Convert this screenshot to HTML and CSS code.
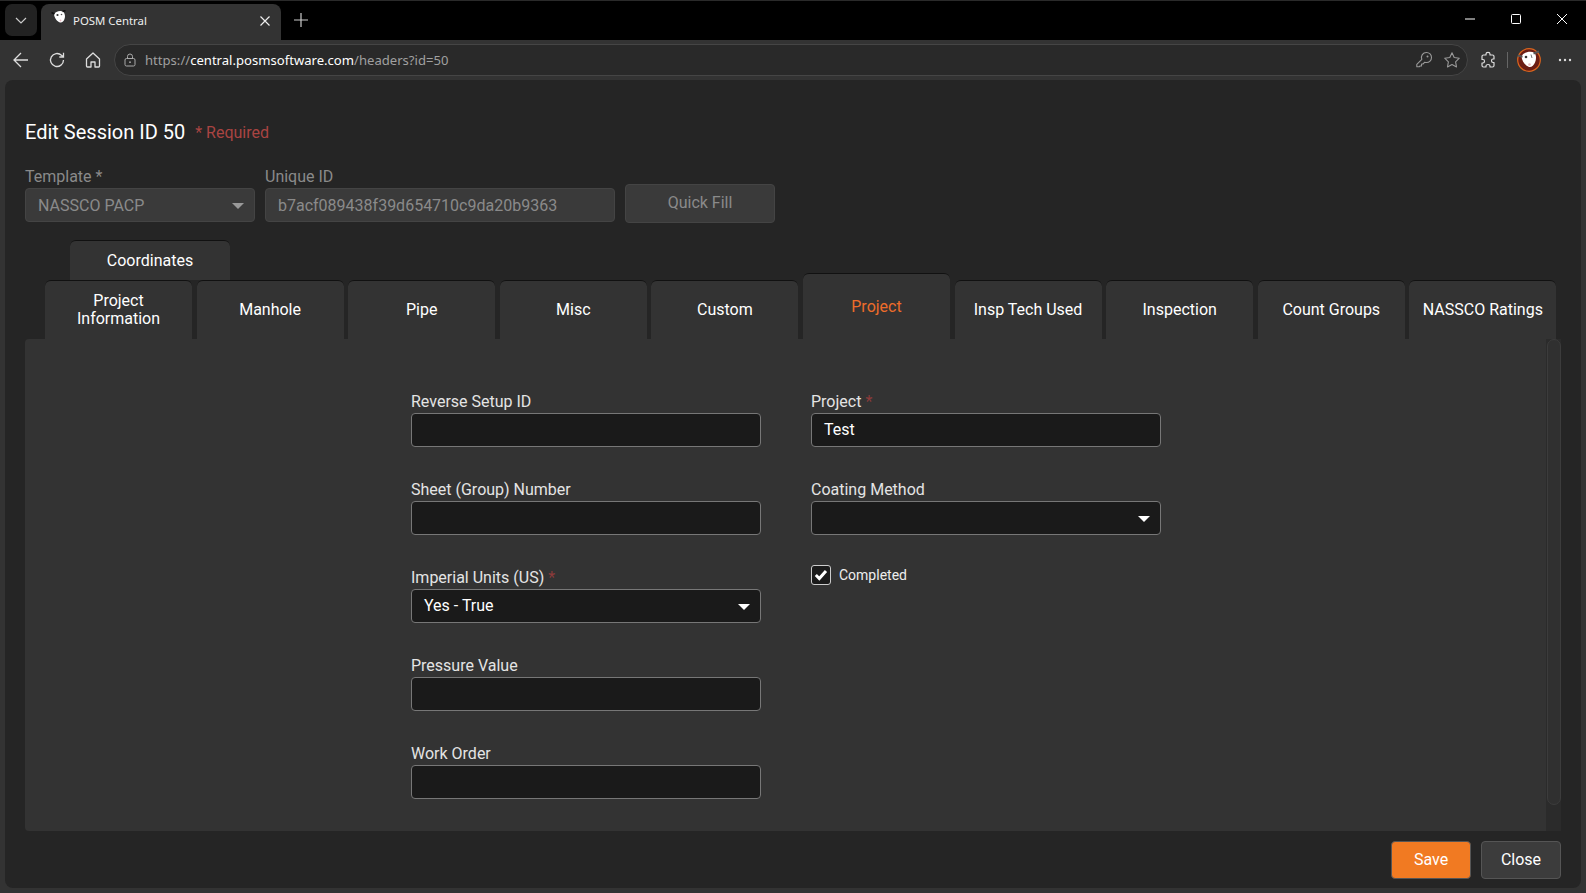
FILE: index.html
```html
<!DOCTYPE html>
<html lang="en">
<head>
    <meta charset="UTF-8">
    <meta name="viewport" content="width=device-width, initial-scale=1.0">
    <title>POSM Central</title>
    <link rel="stylesheet" href="styles.css">
</head>
<body>
    <div class="tabstrip">
        <button class="tab-menu">
            <svg width="14" height="14" viewBox="0 0 14 14"><path d="M2 5l5 5 5-5" fill="none" stroke="#ccc" stroke-width="1.2"/></svg>
        </button>
        <div class="browser-tab">
            <svg class="favicon" width="16" height="16" viewBox="0 0 16 16">
                <path d="M3 4.5C4 1.500 9 0 12 1.500c2 1.500 2.500 5 1.500 7.500-.8 2.500-2.500 4-4.500 3.500C6 11.500 3.500 8 3 4.500z" fill="#fff"/>
                <circle cx="6.500" cy="5" r="1.100" fill="#333"/>
                <circle cx="10.500" cy="4.500" r=".8" fill="#555"/>
                <circle cx="9.500" cy="10.500" r=".9" fill="#e8b8c0"/>
                <path d="M.5 2.500l3 1.500M11.500 1.500l3-1" stroke="#111" stroke-width="1.500"/>
            </svg>
            <span class="browser-tab-title">POSM Central</span>
            <svg class="tab-close" width="12" height="12" viewBox="0 0 12 12"><path d="M1.500 1.500l9 9M10.500 1.500l-9 9" stroke="#eee" stroke-width="1.200"/></svg>
        </div>
        <svg class="new-tab" width="16" height="16" viewBox="0 0 16 16"><path d="M8 1v14M1 8h14" stroke="#ccc" stroke-width="1.200"/></svg>
        <div class="window-buttons">
            <svg width="12" height="12" viewBox="0 0 12 12"><path d="M1 6h10" stroke="#fff" stroke-width="1"/></svg>
            <svg width="12" height="12" viewBox="0 0 12 12"><rect x="1.500" y="1.500" width="9" height="9" rx="1" fill="none" stroke="#fff" stroke-width="1"/></svg>
            <svg width="12" height="12" viewBox="0 0 12 12"><path d="M1 1l10 10M11 1L1 11" stroke="#fff" stroke-width="1"/></svg>
        </div>
    </div>

    <div class="toolbar">
        <svg class="tool-icon" width="18" height="18" viewBox="0 0 18 18"><path d="M16 9H2M9 2L2 9l7 7" fill="none" stroke="#ddd" stroke-width="1.300"/></svg>
        <svg class="tool-icon" width="18" height="18" viewBox="0 0 18 18"><path d="M15.500 9a6.500 6.500 0 1 1-2-4.700L15.500 6M15.500 1.800V6h-4.200" fill="none" stroke="#ddd" stroke-width="1.300"/></svg>
        <svg class="tool-icon" width="18" height="18" viewBox="0 0 18 18"><path d="M2.500 8L9 2l6.500 6v7a1 1 0 0 1-1 1H11v-5H7v5H3.500a1 1 0 0 1-1-1z" fill="none" stroke="#ddd" stroke-width="1.300" stroke-linejoin="round"/></svg>
        <div class="addressbar">
            <svg width="14" height="14" viewBox="0 0 14 14"><rect x="2" y="5.500" width="10" height="7.500" rx="1.500" fill="none" stroke="#aaa"/><path d="M4.500 5.500V3.500a2.500 2.500 0 0 1 5 0v2" fill="none" stroke="#aaa"/><circle cx="7" cy="9.200" r=".9" fill="#aaa"/></svg>
            <span class="url"><span class="url-dim">https://</span>central.posmsoftware.com<span class="url-dim">/headers?id=50</span></span>
            <svg class="address-key" width="18" height="18" viewBox="0 0 18 18"><path d="M11.500 1.500a5 5 0 0 1 0 10c-.6 0-1.200-.1-1.700-.3L8 13H6.500v2H5l-.8.8H1.800v-2.400l5-5a5 5 0 0 1 4.700-6.900z" fill="none" stroke="#999" stroke-width="1.100" stroke-linejoin="round"/><circle cx="12.500" cy="5.500" r="1" fill="#999"/></svg>
            <svg width="18" height="18" viewBox="0 0 18 18"><path d="M9 1.800l2.200 4.700 5.100.7-3.700 3.600.9 5.100L9 13.500l-4.500 2.400.9-5.100L1.700 7.200l5.100-.7z" fill="none" stroke="#999" stroke-width="1.100" stroke-linejoin="round"/></svg>
        </div>
        <svg class="tool-icon extensions" width="18" height="18" viewBox="0 0 18 18"><path d="M7 3c0-2.200 4-2.200 4 0v1h2.500a1.500 1.500 0 0 1 1.500 1.500V8h-1c-2 0-2 3.500 0 3.500h1v3a1.500 1.500 0 0 1-1.500 1.500H11v-1c0-2-4-2-4 0v1H4.500A1.500 1.500 0 0 1 3 14.500V12h1c2 0 2-3.500 0-3.500H3v-3A1.500 1.500 0 0 1 4.500 4H7z" fill="none" stroke="#ddd" stroke-width="1.200" stroke-linejoin="round"/></svg>
        <span class="toolbar-divider"></span>
        <svg class="avatar" width="24" height="24" viewBox="0 0 24 24">
            <circle cx="12" cy="12" r="11.300" fill="#6b1d14" stroke="#d9651f" stroke-width="1.200"/>
            <path d="M4.500 8.500C6 4.500 13 2.500 17 4.500c2.500 2 2.500 6.500 1 10-1.200 3-3.500 5-6 4.500C8.500 18 5 13.500 4.500 8.500z" fill="#fff"/>
            <circle cx="9" cy="9" r="1.300" fill="#333"/>
            <path d="M14 6.500l1 3.500" stroke="#777"/>
            <circle cx="12.500" cy="16.500" r="1.300" fill="#e8b8c0"/>
            <path d="M.8 7.500l4.700 1.200M16.500 5.500L22 3.500" stroke="#555" stroke-width="2"/>
        </svg>
        <svg class="more" width="14" height="4" viewBox="0 0 14 4"><circle cx="2" cy="2" r="1.200" fill="#ddd"/><circle cx="7" cy="2" r="1.200" fill="#ddd"/><circle cx="12" cy="2" r="1.200" fill="#ddd"/></svg>
    </div>

    <div class="modal">
        <div class="modal-title">
            <h1>Edit Session ID 50</h1>
            <span class="required-note">* Required</span>
        </div>

        <div class="session-row">
            <div class="session-field template-field">
                <label>Template *</label>
                <div class="session-input">NASSCO PACP<span class="caret caret-dim"></span></div>
            </div>
            <div class="session-field unique-field">
                <label>Unique ID</label>
                <div class="session-input">b7acf089438f39d654710c9da20b9363</div>
            </div>
            <button class="quick-fill">Quick Fill</button>
        </div>

        <div class="tab-row tab-row-upper">
            <div class="tab">Coordinates</div>
        </div>
        <div class="tab-row">
            <div class="tab">Project Information</div>
            <div class="tab">Manhole</div>
            <div class="tab">Pipe</div>
            <div class="tab">Misc</div>
            <div class="tab">Custom</div>
            <div class="tab tab-active">Project</div>
            <div class="tab">Insp Tech Used</div>
            <div class="tab">Inspection</div>
            <div class="tab">Count Groups</div>
            <div class="tab">NASSCO Ratings</div>
        </div>

        <div class="panel-wrap">
            <div class="panel">
                <div class="form-col">
                    <div class="field">
                        <label>Reverse Setup ID</label>
                        <div class="input"></div>
                    </div>
                    <div class="field">
                        <label>Sheet (Group) Number</label>
                        <div class="input"></div>
                    </div>
                    <div class="field">
                        <label>Imperial Units (US) <span class="star">*</span></label>
                        <div class="input">Yes - True<span class="caret"></span></div>
                    </div>
                    <div class="field">
                        <label>Pressure Value</label>
                        <div class="input"></div>
                    </div>
                    <div class="field">
                        <label>Work Order</label>
                        <div class="input"></div>
                    </div>
                </div>
                <div class="form-col">
                    <div class="field">
                        <label>Project <span class="star">*</span></label>
                        <div class="input">Test</div>
                    </div>
                    <div class="field">
                        <label>Coating Method</label>
                        <div class="input"><span class="caret"></span></div>
                    </div>
                    <div class="check-row">
                        <span class="checkbox">
                            <svg width="14" height="14" viewBox="0 0 14 14"><path d="M1.800 7l3.500 3.500L12 3" fill="none" stroke="#fff" stroke-width="3"/></svg>
                        </span>
                        <span>Completed</span>
                    </div>
                </div>
            </div>
            <div class="scroll-track"><div class="scroll-thumb"></div></div>
        </div>

        <div class="modal-footer">
            <button class="btn btn-save">Save</button>
            <button class="btn btn-close">Close</button>
        </div>
    </div>
</body>
</html>
```

FILE: styles.css
```css
html, body {
    height: 100%;
}
body {
    margin: 0;
    display: flex;
    flex-direction: column;
    height: 893px;
    overflow: hidden;
    background-color: #333;
    font-family: Roboto, "Liberation Sans", sans-serif;
    color: #fff;
}
button {
    font-family: inherit;
    cursor: pointer;
}
svg {
    flex-shrink: 0;
}

/* browser chrome */
.tabstrip {
    display: flex;
    align-items: flex-end;
    height: 40px;
    flex-shrink: 0;
    padding-left: 5px;
    background-color: #000;
    box-sizing: border-box;
    border-top: 1px solid #2a2a2a;
}
.tab-menu {
    display: flex;
    align-items: center;
    justify-content: center;
    width: 32px;
    height: 32px;
    margin-bottom: 4px;
    padding: 0;
    border: none;
    border-radius: 7px;
    background-color: #222;
}
.browser-tab {
    display: flex;
    align-items: center;
    width: 240px;
    height: 36px;
    margin-left: 4px;
    padding: 0 8px 3px 10px;
    box-sizing: border-box;
    border-radius: 8px 8px 0 0;
    background-color: #333;
}
.favicon {
    margin-top: -5px;
}
.browser-tab-title {
    flex: 1;
    margin-left: 6px;
    font-family: "Noto Sans", sans-serif;
    font-size: 11.4px;
    color: #eee;
}
.tab-close {
    margin-right: 2px;
}
.new-tab {
    margin: 0 0 12px 12px;
}
.window-buttons {
    display: flex;
    gap: 34px;
    margin: 0 18px 15px auto;
}
.toolbar {
    display: flex;
    align-items: center;
    height: 40px;
    flex-shrink: 0;
    padding: 0 9px 0 12px;
    box-sizing: border-box;
    background-color: #333;
}
.tool-icon {
    margin-right: 18px;
}
.addressbar {
    display: flex;
    align-items: center;
    gap: 8px;
    flex: 1;
    height: 32px;
    margin-left: -6px;
    padding: 0 6px 0 8px;
    box-sizing: border-box;
    border: 1px solid #454545;
    border-radius: 16px;
    background-color: #292929;
}
.url {
    flex: 1;
    font-family: "Noto Sans", sans-serif;
    font-size: 13.1px;
    color: #fff;
}
.url-dim {
    color: #a0a0a0;
}
.address-key {
    margin-right: 2px;
}
.extensions {
    margin: 0 0 0 11px;
}
.toolbar-divider {
    width: 1px;
    height: 16px;
    margin: 0 9px 0 10px;
    background-color: #666;
}
.more {
    margin: 0 5px 0 17px;
}

/* modal */
.modal {
    flex: 1;
    display: flex;
    flex-direction: column;
    margin: 0 5px 5px;
    padding: 0 20px;
    border-radius: 8px;
    background-color: #252525;
    min-height: 0;
}
.modal-title {
    display: flex;
    align-items: center;
    gap: 10px;
    padding-top: 38px;
    height: 28px;
    margin-bottom: 2px;
}
.modal-title h1 {
    margin: 0;
    font-size: 20px;
    font-weight: 400;
    color: #fff;
}
.required-note {
    font-size: 16px;
    color: #a94442;
}
.session-row {
    display: flex;
    align-items: flex-end;
    margin-top: 20px;
    height: 54px;
}
.session-field {
    display: flex;
    flex-direction: column;
    margin-right: 10px;
}
.session-field label {
    margin-bottom: 1px;
    font-size: 16px;
    line-height: 20px;
    color: #8a8a8a;
}
.template-field {
    width: 230px;
}
.unique-field {
    width: 350px;
}
.session-input {
    position: relative;
    height: 34px;
    padding: 0 12px;
    box-sizing: border-box;
    border: 1px solid #444;
    border-radius: 4px;
    background-color: #3a3a3a;
    font-size: 16px;
    line-height: 34px;
    color: #8a8a8a;
}
.quick-fill {
    width: 150px;
    height: 39px;
    margin-bottom: -1px;
    padding-bottom: 3px;
    border: 1px solid #444;
    border-radius: 4px;
    background-color: #3a3a3a;
    font-size: 16px;
    color: #8a8a8a;
}
.caret {
    position: absolute;
    right: 10px;
    top: 14px;
    border-left: 6.5px solid transparent;
    border-right: 6.5px solid transparent;
    border-top: 6px solid #fff;
}
.caret-dim {
    border-top-color: #999;
}

/* tabs */
.tab-row {
    display: flex;
    gap: 4.6px;
    height: 59px;
    padding-left: 20px;
    flex-shrink: 0;
}
.tab-row-upper {
    height: 40px;
    margin-top: 18px;
    padding-left: 45px;
}
.tab {
    display: flex;
    align-items: center;
    justify-content: center;
    width: 147px;
    box-sizing: border-box;
    padding: 0 10px;
    border-top: 1px solid #111;
    border-radius: 6px 6px 0 0;
    background-color: #333;
    text-align: center;
    font-size: 16px;
    line-height: 18px;
    color: #fff;
}
.tab-row-upper .tab {
    width: 160px;
}
.tab-active {
    height: 66px;
    margin-top: -7px;
    color: #ee6c2a;
}

/* panel */
.panel-wrap {
    display: flex;
    height: 492px;
    flex-shrink: 0;
}
.panel {
    flex: 1;
    display: flex;
    justify-content: center;
    gap: 50px;
    padding: 50px 0 0 1px;
    border-radius: 4px 0 0 4px;
    background-color: #333;
}
.form-col {
    width: 350px;
}
.field {
    height: 88px;
}
.field label {
    display: block;
    height: 24px;
    font-size: 16px;
    line-height: 26px;
    color: #e4e4e4;
}
.star {
    color: #8c3b3b;
}
.input {
    position: relative;
    height: 34px;
    padding: 0 12px;
    box-sizing: border-box;
    border: 1px solid #777;
    border-radius: 4px;
    background-color: #1a1a1a;
    font-size: 16px;
    line-height: 32px;
    color: #fff;
}
.check-row {
    display: flex;
    align-items: center;
    gap: 8px;
    font-size: 14px;
    color: #eee;
}
.checkbox {
    display: flex;
    align-items: center;
    justify-content: center;
    width: 20px;
    height: 20px;
    box-sizing: border-box;
    border: 1px solid #ccc;
    border-radius: 3px;
    background-color: #1a1a1a;
}
.scroll-track {
    width: 15px;
    background-color: #2b2b2b;
}
.scroll-thumb {
    height: 466px;
    margin: 0 0 0 1px;
    box-sizing: border-box;
    border: 1px solid #3c3c3c;
    border-radius: 7px;
    background-color: #303030;
}

.modal-footer {
    display: flex;
    justify-content: flex-end;
    gap: 10px;
    padding-top: 10px;
}
.btn {
    width: 80px;
    height: 38px;
    padding-bottom: 3px;
    border-radius: 4px;
    font-size: 16px;
    color: #fff;
}
.btn-save {
    border: 1px solid #555;
    background-color: #f17a22;
}
.btn-close {
    border: 1px solid #555;
    background-color: #3c3c3c;
}
```
